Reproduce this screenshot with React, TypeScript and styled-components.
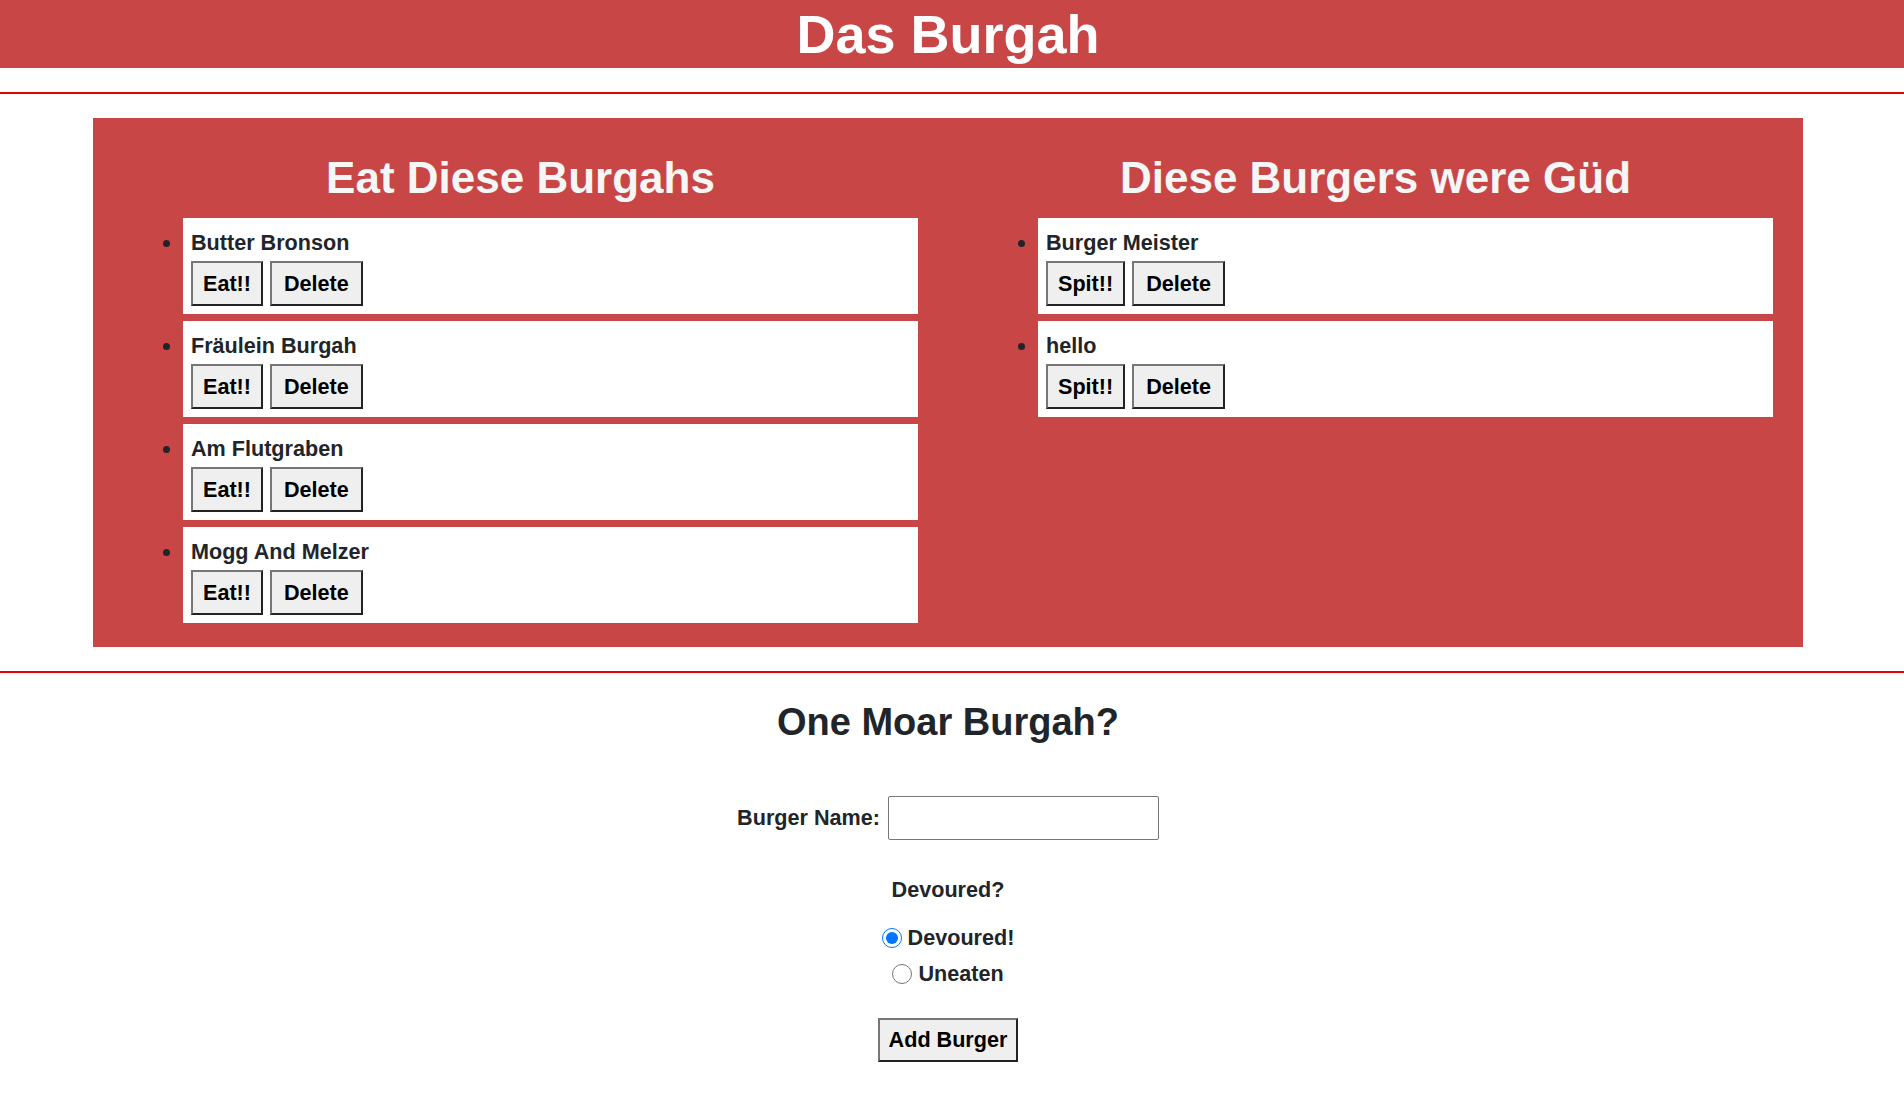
import React, { useState } from 'react';
import styled, { createGlobalStyle } from 'styled-components';

const red = '#c84646';

const GlobalStyle = createGlobalStyle`
  body {
    margin: 0;
    background: #fff;
    color: #212529;
    font-family: "Liberation Sans", Arial, sans-serif;
    font-weight: bold;
    font-size: 21.6px;
  }
`;

const Header = styled.header`
  background: ${red};
  height: 68px;
  padding-right: 8px;
  text-align: center;
`;

const SiteTitle = styled.h1`
  margin: 0;
  font-size: 54px;
  line-height: 68px;
  color: #fff;
`;

const Rule = styled.hr`
  border: none;
  height: 2px;
  background: #e60000;
  margin: 24px 0;
`;

const Panel = styled.section`
  background: ${red};
  margin: 0 101px 0 93px;
  padding: 34px 0 17px;
  display: grid;
  grid-template-columns: 1fr 1fr;
  align-items: start;
`;

const Column = styled.div`
  display: flex;
  flex-direction: column;
`;

const ColumnTitle = styled.h2`
  margin: 0 0 15px;
  font-size: 44px;
  line-height: 51px;
  color: #f6f6f6;
  text-align: center;
`;

const BurgerList = styled.ul`
  margin: 0;
  padding: 0 30px 0 90px;
  list-style: disc outside;
`;

const BurgerItem = styled.li`
  background: #fff;
  padding: 8px;
  margin-bottom: 7px;
  color: #212529;
`;

const BurgerName = styled.div`
  line-height: 34px;
`;

const ButtonRow = styled.div`
  display: flex;
  gap: 7px;
  margin-top: 1px;
`;

const Button = styled.button<{ $pad?: number; $height?: number }>`
  height: ${(p) => p.$height ?? 45}px;
  padding: 0 ${(p) => p.$pad ?? 10}px;
  background: #efefef;
  color: #000;
  font-family: "Liberation Sans", Arial, sans-serif;
  font-weight: bold;
  font-size: 21.6px;
  border-width: 2px;
  border-style: solid;
  border-color: #767676 #222 #222 #767676;
  cursor: pointer;
`;

const FormSection = styled.form`
  display: flex;
  flex-direction: column;
  align-items: center;
  padding-right: 8px;
`;

const FormTitle = styled.h2`
  margin: 3px 0 0;
  font-size: 38px;
  line-height: 1.2;
  color: #212529;
`;

const NameRow = styled.div`
  display: flex;
  align-items: center;
  gap: 8px;
  margin-top: 50px;
`;

const NameInput = styled.input`
  width: 271px;
  height: 44px;
  box-sizing: border-box;
  border: 1px solid #767676;
  border-radius: 2px;
  font-size: 20px;
  padding: 0 8px;
`;

const Question = styled.div`
  margin-top: 37px;
  line-height: 26px;
`;

const RadioLabel = styled.label<{ $first?: boolean }>`
  display: flex;
  align-items: center;
  line-height: 26px;
  margin-top: ${(p) => (p.$first ? 22 : 10)}px;
`;

const Radio = styled.input`
  width: 20px;
  height: 20px;
  margin: 0 6px 0 0;
  accent-color: #0075ff;
`;

const SubmitWrap = styled.div`
  margin-top: 31px;
  margin-bottom: 40px;
`;

const uneaten = ['Butter Bronson', 'Fräulein Burgah', 'Am Flutgraben', 'Mogg And Melzer'];
const eaten = ['Burger Meister', 'hello'];

const BurgerColumn: React.FC<{ title: string; items: string[]; action: string }> = ({ title, items, action }) => (
  <Column>
    <ColumnTitle>{title}</ColumnTitle>
    <BurgerList>
      {items.map((name) => (
        <BurgerItem key={name}>
          <BurgerName>{name}</BurgerName>
          <ButtonRow>
            <Button type="button">{action}</Button>
            <Button type="button" $pad={12}>
              Delete
            </Button>
          </ButtonRow>
        </BurgerItem>
      ))}
    </BurgerList>
  </Column>
);

export default function App() {
  const [devoured, setDevoured] = useState(true);
  return (
    <>
      <GlobalStyle />
      <Header>
        <SiteTitle>Das Burgah</SiteTitle>
      </Header>
      <Rule />
      <Panel>
        <BurgerColumn title="Eat Diese Burgahs" items={uneaten} action="Eat!!" />
        <BurgerColumn title="Diese Burgers were Güd" items={eaten} action="Spit!!" />
      </Panel>
      <Rule />
      <FormSection onSubmit={(e) => e.preventDefault()}>
        <FormTitle>One Moar Burgah?</FormTitle>
        <NameRow>
          <label htmlFor="burger-name">Burger Name:</label>
          <NameInput id="burger-name" type="text" />
        </NameRow>
        <Question>Devoured?</Question>
        <RadioLabel $first>
          <Radio type="radio" name="devoured" checked={devoured} onChange={() => setDevoured(true)} />
          Devoured!
        </RadioLabel>
        <RadioLabel>
          <Radio type="radio" name="devoured" checked={!devoured} onChange={() => setDevoured(false)} />
          Uneaten
        </RadioLabel>
        <SubmitWrap>
          <Button type="submit" $pad={9} $height={44}>
            Add Burger
          </Button>
        </SubmitWrap>
      </FormSection>
    </>
  );
}
